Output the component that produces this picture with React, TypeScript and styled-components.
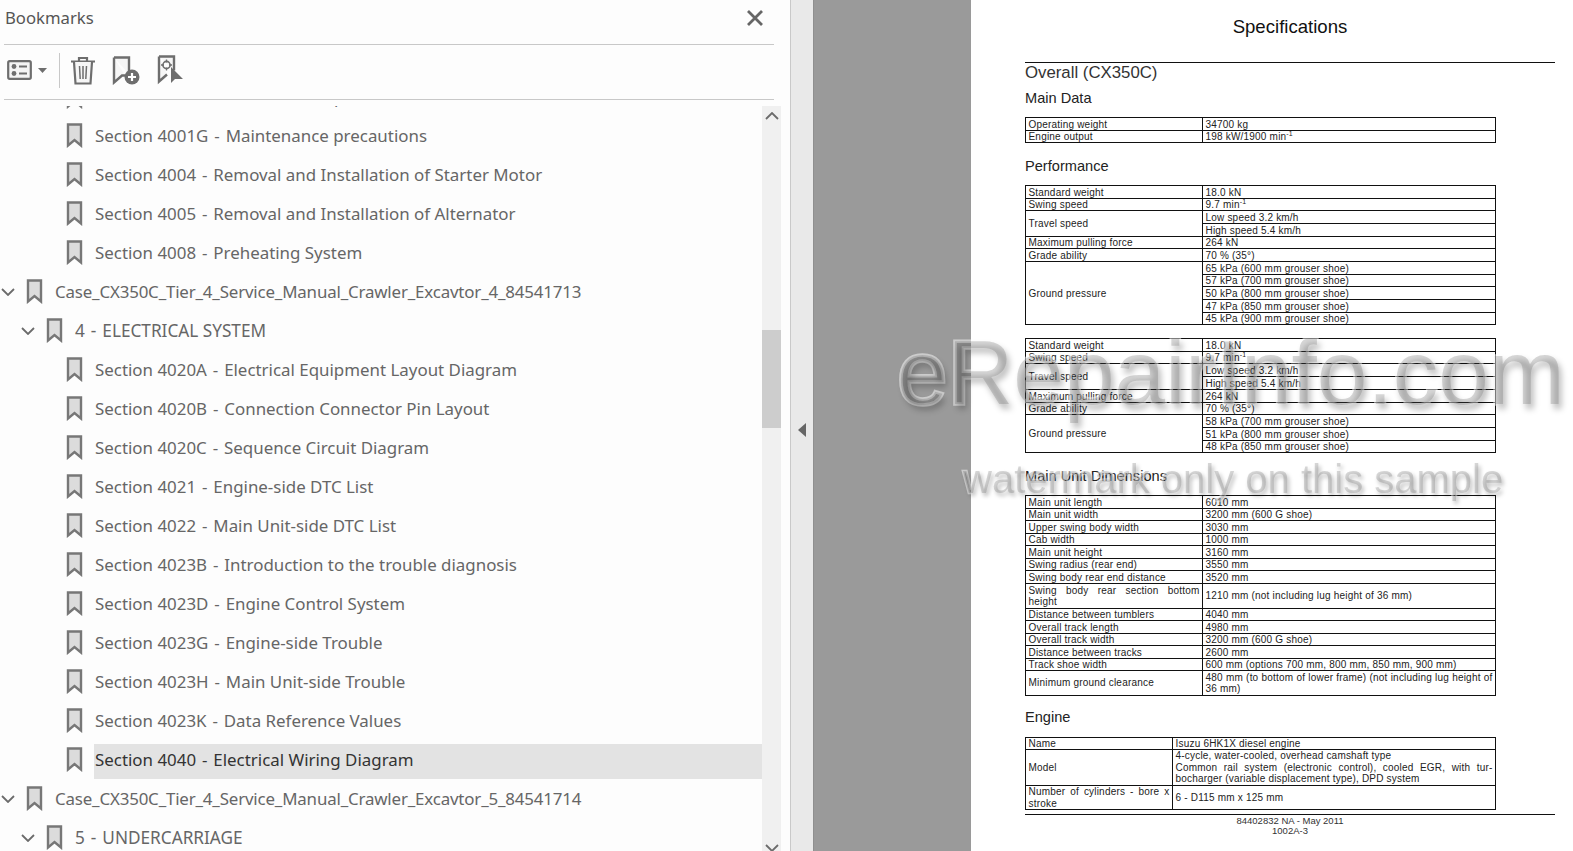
import { createGlobalStyle, styled } from 'styled-components';

type TreeItem = { label: string; level: number; selected?: boolean };
type SpecRow = { label: string; values: string[]; justify?: boolean; sup?: boolean; lines?: number };

const treeItems: TreeItem[] = [
  { label: 'Section 4001F - Standard Setup', level: 2 },
  { label: 'Section 4001G - Maintenance precautions', level: 2 },
  { label: 'Section 4004 - Removal and Installation of Starter Motor', level: 2 },
  { label: 'Section 4005 - Removal and Installation of Alternator', level: 2 },
  { label: 'Section 4008 - Preheating System', level: 2 },
  { label: 'Case_CX350C_Tier_4_Service_Manual_Crawler_Excavtor_4_84541713', level: 0 },
  { label: '4 - ELECTRICAL SYSTEM', level: 1 },
  { label: 'Section 4020A - Electrical Equipment Layout Diagram', level: 2 },
  { label: 'Section 4020B - Connection Connector Pin Layout', level: 2 },
  { label: 'Section 4020C - Sequence Circuit Diagram', level: 2 },
  { label: 'Section 4021 - Engine-side DTC List', level: 2 },
  { label: 'Section 4022 - Main Unit-side DTC List', level: 2 },
  { label: 'Section 4023B - Introduction to the trouble diagnosis', level: 2 },
  { label: 'Section 4023D - Engine Control System', level: 2 },
  { label: 'Section 4023G - Engine-side Trouble', level: 2 },
  { label: 'Section 4023H - Main Unit-side Trouble', level: 2 },
  { label: 'Section 4023K - Data Reference Values', level: 2 },
  { label: 'Section 4040 - Electrical Wiring Diagram', level: 2, selected: true },
  { label: 'Case_CX350C_Tier_4_Service_Manual_Crawler_Excavtor_5_84541714', level: 0 },
  { label: '5 - UNDERCARRIAGE', level: 1 },
];

const mainData: SpecRow[] = [
  { label: 'Operating weight', values: ['34700 kg'] },
  { label: 'Engine output', values: ['198 kW/1900 min'], sup: true },
];

const performanceA: SpecRow[] = [
  { label: 'Standard weight', values: ['18.0 kN'] },
  { label: 'Swing speed', values: ['9.7 min'], sup: true },
  { label: 'Travel speed', values: ['Low speed 3.2 km/h', 'High speed 5.4 km/h'] },
  { label: 'Maximum pulling force', values: ['264 kN'] },
  { label: 'Grade ability', values: ['70 % (35°)'] },
  {
    label: 'Ground pressure',
    values: [
      '65 kPa (600 mm grouser shoe)',
      '57 kPa (700 mm grouser shoe)',
      '50 kPa (800 mm grouser shoe)',
      '47 kPa (850 mm grouser shoe)',
      '45 kPa (900 mm grouser shoe)',
    ],
  },
];

const performanceB: SpecRow[] = [
  { label: 'Standard weight', values: ['18.0 kN'] },
  { label: 'Swing speed', values: ['9.7 min'], sup: true },
  { label: 'Travel speed', values: ['Low speed 3.2 km/h', 'High speed 5.4 km/h'] },
  { label: 'Maximum pulling force', values: ['264 kN'] },
  { label: 'Grade ability', values: ['70 % (35°)'] },
  {
    label: 'Ground pressure',
    values: ['58 kPa (700 mm grouser shoe)', '51 kPa (800 mm grouser shoe)', '48 kPa (850 mm grouser shoe)'],
  },
];

const dimensions: SpecRow[] = [
  { label: 'Main unit length', values: ['6010 mm'] },
  { label: 'Main unit width', values: ['3200 mm (600 G shoe)'] },
  { label: 'Upper swing body width', values: ['3030 mm'] },
  { label: 'Cab width', values: ['1000 mm'] },
  { label: 'Main unit height', values: ['3160 mm'] },
  { label: 'Swing radius (rear end)', values: ['3550 mm'] },
  { label: 'Swing body rear end distance', values: ['3520 mm'] },
  { label: 'Swing body rear section bottom height', values: ['1210 mm (not including lug height of 36 mm)'], justify: true, lines: 2 },
  { label: 'Distance between tumblers', values: ['4040 mm'] },
  { label: 'Overall track length', values: ['4980 mm'] },
  { label: 'Overall track width', values: ['3200 mm (600 G shoe)'] },
  { label: 'Distance between tracks', values: ['2600 mm'] },
  { label: 'Track shoe width', values: ['600 mm (options 700 mm, 800 mm, 850 mm, 900 mm)'] },
  { label: 'Minimum ground clearance', values: ['480 mm (to bottom of lower frame) (not including lug height of 36 mm)'], lines: 2 },
];

const engine: SpecRow[] = [
  { label: 'Name', values: ['Isuzu 6HK1X diesel engine'] },
  {
    label: 'Model',
    values: ['4-cycle, water-cooled, overhead camshaft type\nCommon rail system (electronic control), cooled EGR, with tur-bocharger (variable displacement type), DPD system'],
    lines: 3,
  },
  { label: 'Number of cylinders - bore x stroke', values: ['6 - D115 mm x 125 mm'], justify: true, lines: 2 },
];

function BookmarkIcon() {
  return (
    <svg width="17" height="25" viewBox="0 0 17 25">
      <path d="M2 1.5h13v21l-6.5-5.5L2 22.5z" fill="#dcdcdc" stroke="#777" strokeWidth="2.4" strokeLinejoin="miter" />
    </svg>
  );
}

function Chevron({ up }: { up?: boolean }) {
  return (
    <svg width="14" height="8" viewBox="0 0 14 8">
      <path d={up ? 'M1 7l6-6 6 6' : 'M1 1l6 6 6-6'} fill="none" stroke="#6b6b6b" strokeWidth="1.8" />
    </svg>
  );
}

// row heights come from a fractional pitch, rounded so the borders stay on whole pixels
function SpecTable({ rows, split, pitch }: { rows: SpecRow[]; split: number; pitch: number }) {
  let used = 0;
  const nextHeight = (lines: number) => {
    const start = Math.round(used * pitch);
    used += lines;
    return Math.round(used * pitch) - start;
  };

  return (
    <Table>
      <colgroup>
        <col width={split} />
        <col />
      </colgroup>
      <tbody>
        {rows.map((row) =>
          row.values.map((value, i) => {
            const lines = row.lines ?? 1;
            return (
              <Row key={row.label + i} $height={nextHeight(lines)}>
                {i === 0 && (
                  <Cell rowSpan={row.values.length} $justify={row.justify} $roomy={lines > 1}>
                    {row.label}
                  </Cell>
                )}
                <Cell $justify={lines > 2 || value.startsWith('480')} $roomy={lines > 1}>
                  {value.split('\n').map((line) => (
                    <CellLine key={line}>{line}</CellLine>
                  ))}
                  {row.sup && <Sup>-1</Sup>}
                </Cell>
              </Row>
            );
          }),
        )}
      </tbody>
    </Table>
  );
}

function TreeText({ label }: { label: string }) {
  const [head, ...rest] = label.split(' - ');
  if (!rest.length) return <>{label}</>;
  return (
    <>
      {head} <Dash>-</Dash> {rest.join(' - ')}
    </>
  );
}

export default function App() {
  return (
    <Screen>
      <GlobalStyle />
      <Panel>
        <PanelHeader>
          <PanelTitle>Bookmarks</PanelTitle>
          <CloseButton>
            <svg width="18" height="18" viewBox="0 0 18 18">
              <path d="M2 2l14 14M16 2L2 16" stroke="#666" strokeWidth="2.8" />
            </svg>
          </CloseButton>
        </PanelHeader>
        <Toolbar>
          <ToolGroup>
            <svg width="25" height="20" viewBox="0 0 25 20">
              <rect x="1.2" y="1.2" width="22.6" height="17.6" rx="1.5" fill="#f4f4f4" stroke="#6e6e6e" strokeWidth="2.2" />
              <circle cx="7" cy="6.5" r="2.4" fill="#6e6e6e" />
              <circle cx="7" cy="13.5" r="2.4" fill="#6e6e6e" />
              <path d="M12 6.5h8M12 13.5h8" stroke="#6e6e6e" strokeWidth="2.2" />
            </svg>
            <svg width="9" height="5" viewBox="0 0 9 5">
              <path d="M0 0h9L4.5 5z" fill="#6e6e6e" />
            </svg>
          </ToolGroup>
          <ToolDivider />
          <svg width="26" height="29" viewBox="0 0 26 29">
            <path d="M1 5.5h24M9 5V2h8v3" fill="none" stroke="#6e6e6e" strokeWidth="2.2" />
            <path d="M4 6l1.5 21.5h15L22 6" fill="#f6f6f6" stroke="#6e6e6e" strokeWidth="2.2" />
            <path d="M9.5 10l.7 13M13 10v13M16.5 10l-.7 13" stroke="#6e6e6e" strokeWidth="1.5" />
          </svg>
          <svg width="29" height="29" viewBox="0 0 29 29">
            <path d="M2 1.5h15v16.5M2 1.5v25l8-7h3" fill="#f6f6f6" stroke="#6e6e6e" strokeWidth="2.4" />
            <circle cx="20" cy="21" r="7.5" fill="#6e6e6e" />
            <path d="M20 17v8M16 21h8" stroke="#fff" strokeWidth="2.2" />
          </svg>
          <svg width="27" height="30" viewBox="0 0 27 30">
            <path d="M2 1.5h15v14M2 1.5v25l8-7" fill="#f6f6f6" stroke="#6e6e6e" strokeWidth="2.4" />
            <circle cx="9.5" cy="10" r="3.6" fill="none" stroke="#6e6e6e" strokeWidth="1.6" />
            <path d="M9.5 4.5v3M9.5 12.5v3M4 10h3M12 10h3" stroke="#6e6e6e" strokeWidth="1.3" />
            <path d="M14 12v16l4-4h8z" fill="#6e6e6e" />
          </svg>
        </Toolbar>
        <TreeArea>
          <TreeClip>
            <Tree>
              {treeItems.map((item) => (
                <TreeRow key={item.label} $level={item.level}>
                  <Toggle>{item.level < 2 && <Chevron />}</Toggle>
                  <BookmarkSlot>
                    <BookmarkIcon />
                  </BookmarkSlot>
                  <TreeLabel $selected={item.selected} $level={item.level}>
                    <TreeText label={item.label} />
                  </TreeLabel>
                </TreeRow>
              ))}
            </Tree>
          </TreeClip>
          <Scrollbar>
            <ScrollButton>
              <Chevron up />
            </ScrollButton>
            <ScrollThumb />
            <ScrollButton $bottom>
              <Chevron />
            </ScrollButton>
          </Scrollbar>
        </TreeArea>
      </Panel>
      <Splitter>
        <svg width="8" height="14" viewBox="0 0 8 14">
          <path d="M8 0v14L0 7z" fill="#666" />
        </svg>
      </Splitter>
      <Backdrop />
      <Page>
        <PageTitle>Specifications</PageTitle>
        <Rule />
        <ChapterTitle>Overall (CX350C)</ChapterTitle>
        <SectionTitle $top={8}>Main Data</SectionTitle>
        <TableSlot $top={11}>
          <SpecTable rows={mainData} split={177} pitch={12.5} />
        </TableSlot>
        <SectionTitle $top={15}>Performance</SectionTitle>
        <TableSlot $top={11}>
          <SpecTable rows={performanceA} split={177} pitch={12.67} />
        </TableSlot>
        <TableSlot $top={13}>
          <SpecTable rows={performanceB} split={177} pitch={12.7} />
        </TableSlot>
        <SectionTitle $top={15}>Main Unit Dimensions</SectionTitle>
        <TableSlot $top={11}>
          <SpecTable rows={dimensions} split={177} pitch={12.5} />
        </TableSlot>
        <SectionTitle $top={13}>Engine</SectionTitle>
        <TableSlot $top={12}>
          <SpecTable rows={engine} split={147} pitch={12} />
        </TableSlot>
        <FooterRule />
        <FooterText>84402832 NA - May 2011</FooterText>
        <FooterText>1002A-3</FooterText>
      </Page>
      <WatermarkBig>eRepairInfo.com</WatermarkBig>
      <WatermarkSmall>watermark only on this sample</WatermarkSmall>
    </Screen>
  );
}

const GlobalStyle = createGlobalStyle`
  html, body {
    margin: 0;
    height: 100%;
    overflow: hidden;
    background: #fff;
  }
  #root {
    height: 100%;
  }
`;

const Screen = styled.div`
  position: relative;
  display: flex;
  height: 851px;
  overflow: hidden;
  font-family: 'Noto Sans', sans-serif;
`;

const Panel = styled.aside`
  display: flex;
  flex-direction: column;
  box-sizing: border-box;
  width: 791px;
  flex: none;
  background: #fdfdfd;
  border-right: 1px solid #c9c9c9;
`;

const PanelHeader = styled.header`
  display: flex;
  align-items: center;
  justify-content: space-between;
  box-sizing: border-box;
  height: 45px;
  margin: 0 16px 0 4px;
  padding: 0 0 9px 1px;
  border-bottom: 1px solid #c8c8c8;
`;

const PanelTitle = styled.div`
  font-size: 16.7px;
  color: #555;
`;

const CloseButton = styled.div`
  display: flex;
  margin-right: 10px;
`;

const Toolbar = styled.div`
  display: flex;
  align-items: center;
  gap: 16px;
  box-sizing: border-box;
  height: 55px;
  margin: 0 16px 0 4px;
  padding: 0 0 4px 3px;
  border-bottom: 1px solid #c8c8c8;
`;

const ToolGroup = styled.div`
  display: flex;
  align-items: center;
  gap: 6px;
`;

const ToolDivider = styled.div`
  width: 1px;
  height: 35px;
  margin-left: -4px;
  margin-right: -6px;
  background: #c8c8c8;
`;

const TreeArea = styled.div`
  display: flex;
  flex: 1;
  min-height: 0;
  padding: 6px 9px 0 0;
`;

const TreeClip = styled.div`
  flex: 1;
  min-width: 0;
  overflow: hidden;
`;

const Tree = styled.div`
  margin-top: -29px;
`;

const TreeRow = styled.div<{ $level: number }>`
  display: flex;
  align-items: center;
  height: 39px;
  padding-left: ${(p) => p.$level * 20}px;
`;

const Toggle = styled.div`
  display: flex;
  justify-content: center;
  width: 16px;
  flex: none;
`;

const BookmarkSlot = styled.div`
  display: flex;
  width: 27px;
  margin-left: 10px;
  flex: none;
`;

const TreeLabel = styled.div<{ $selected?: boolean; $level: number }>`
  flex: 1;
  min-width: 0;
  height: 35px;
  margin: 4px 0 0 1px;
  padding-left: 1px;
  line-height: 31px;
  font-size: ${(p) => (p.$level === 1 ? 17.2 : 16.9)}px;
  letter-spacing: ${(p) => (p.$level === 0 ? -0.17 : 0)}px;
  white-space: nowrap;
  color: ${(p) => (p.$selected ? '#333' : '#666')};
  background: ${(p) => (p.$selected ? '#e3e3e3' : 'transparent')};
`;

const Dash = styled.span`
  margin: 0 1.5px;
`;

const Scrollbar = styled.div`
  position: relative;
  width: 19px;
  flex: none;
  background: #f0f0f0;
`;

const ScrollButton = styled.div<{ $bottom?: boolean }>`
  position: absolute;
  left: 3px;
  ${(p) => (p.$bottom ? 'bottom: -1px;' : 'top: 6px;')}
  display: flex;
`;

const ScrollThumb = styled.div`
  position: absolute;
  top: 224px;
  left: 0;
  width: 19px;
  height: 98px;
  background: #cdcdcd;
`;

const Splitter = styled.div`
  display: flex;
  align-items: center;
  justify-content: center;
  box-sizing: border-box;
  width: 22px;
  flex: none;
  padding: 8px 1px 0 0;
  background: #e9e9e9;
`;

const Backdrop = styled.div`
  width: 158px;
  flex: none;
  background: #9a9a9a;
  border-left: 1px solid #8f8f8f;
  box-sizing: border-box;
`;

const Page = styled.main`
  flex: 1;
  min-width: 0;
  box-sizing: border-box;
  padding: 0 18px 0 54px;
  background: #fff;
  font-family: 'Liberation Sans', Arial, sans-serif;
  color: #111;
`;

const PageTitle = styled.div`
  height: 62px;
  padding-top: 16px;
  box-sizing: border-box;
  text-align: center;
  font-size: 18.6px;
  line-height: 21px;
`;

const Rule = styled.div`
  height: 1px;
  background: #111;
`;

const ChapterTitle = styled.div`
  font-size: 16.8px;
  line-height: 19px;
  color: #333;
`;

const SectionTitle = styled.div<{ $top: number }>`
  margin-top: ${(p) => p.$top}px;
  font-size: 14.6px;
  line-height: 16px;
  color: #222;
`;

const TableSlot = styled.div<{ $top: number }>`
  margin-top: ${(p) => p.$top}px;
`;

const Table = styled.table`
  width: 471px;
  table-layout: fixed;
  border-collapse: collapse;
  font-size: 10px;
  letter-spacing: 0.2px;
`;

const Row = styled.tr<{ $height: number }>`
  height: ${(p) => p.$height}px;
`;

const Cell = styled.td<{ $justify?: boolean; $roomy?: boolean }>`
  padding: 0 2.5px;
  border: 1px solid #111;
  vertical-align: middle;
  line-height: ${(p) => (p.$roomy ? 11.5 : 11)}px;
  color: #222;
  text-align: ${(p) => (p.$justify ? 'justify' : 'left')};
`;

const CellLine = styled.span`
  &:not(:last-of-type)::after {
    content: '\\A';
    white-space: pre;
  }
`;

const Sup = styled.sup`
  font-size: 7px;
  line-height: 0;
`;

const FooterRule = styled.div`
  height: 1px;
  margin-top: 4px;
  margin-bottom: 1px;
  background: #111;
`;

const FooterText = styled.div`
  text-align: center;
  font-size: 9.5px;
  line-height: 10px;
  color: #333;
`;

const WatermarkBig = styled.div`
  position: absolute;
  left: 897px;
  top: 320px;
  font-family: 'Liberation Sans', Arial, sans-serif;
  font-size: 91px;
  line-height: 105px;
  white-space: nowrap;
  color: rgba(90, 90, 90, 0.24);
  -webkit-text-stroke: 3.5px rgba(255, 255, 255, 0.5);
  paint-order: stroke fill;
  text-shadow: 3px 5px 6px rgba(0, 0, 0, 0.26);
  filter: blur(0.6px);
  pointer-events: none;
`;

const WatermarkSmall = styled.div`
  position: absolute;
  left: 963px;
  top: 456px;
  font-family: 'Liberation Sans', Arial, sans-serif;
  font-size: 40px;
  line-height: 46px;
  white-space: nowrap;
  color: rgba(90, 90, 90, 0.24);
  -webkit-text-stroke: 2.5px rgba(255, 255, 255, 0.5);
  paint-order: stroke fill;
  text-shadow: 2px 3px 4px rgba(0, 0, 0, 0.26);
  filter: blur(0.6px);
  pointer-events: none;
`;
